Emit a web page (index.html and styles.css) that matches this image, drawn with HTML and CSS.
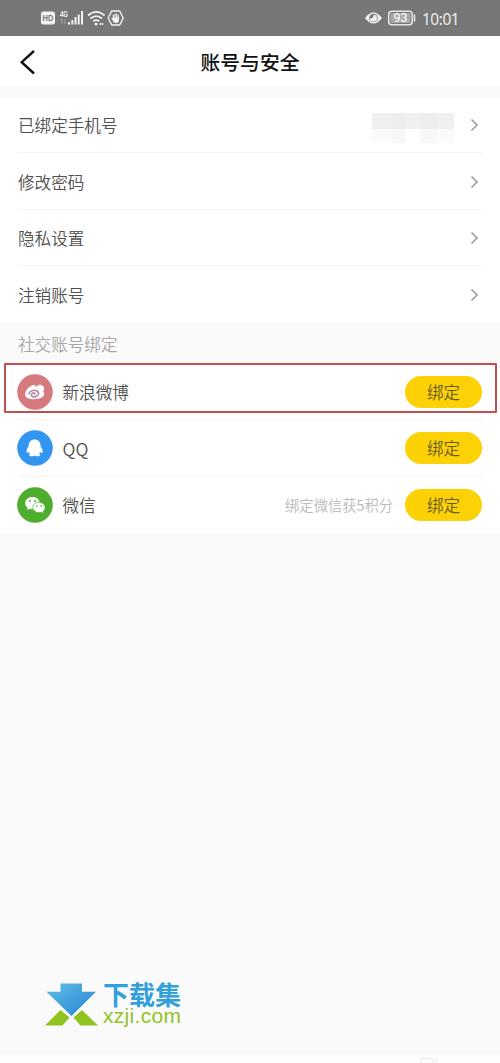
FILE: index.html
```html
<!DOCTYPE html>
<html lang="zh-CN">
<head>
<meta charset="utf-8">
<title>账号与安全</title>
<link rel="stylesheet" href="styles.css">
</head>
<body>
<div class="screen">
  <div class="status">
    <svg class="status-left" width="84" height="20" viewBox="0 0 84 20">
      <rect x="1" y="3.500" width="14" height="13" rx="2.500" fill="#f2f2f2"/>
      <text x="2.600" y="13.200" class="hd" textLength="10.800" lengthAdjust="spacingAndGlyphs">HD</text>
      <text x="20" y="9" class="net" textLength="8" lengthAdjust="spacingAndGlyphs">4G</text>
      <path d="M22 11v5M21 12l1-1M25 11v5l1-1" stroke="#a6a6a6" stroke-width=".9" fill="none"/>
      <path d="M29 14v2.500M32.300 12v4.500M35.500 9v7.500M38.700 6.500v10M42 3v13.500" stroke="#f2f2f2" stroke-width="2" fill="none"/>
      <path d="M48 7.500q8.300-7.200 16.600 0M50.500 10.500q5.800-4.800 11.600 0M53.200 13.200q3.100-2.200 6 0" stroke="#f2f2f2" stroke-width="1.700" fill="none"/>
      <circle cx="56" cy="16" r="1.500" fill="#f2f2f2"/>
      <path d="M59.500 16h4" stroke="#eee" stroke-width="2" stroke-dasharray="1.600 .6"/>
      <path d="M71.700 3h8l3.500 7-3.500 7h-8l-3.500-7z" fill="none" stroke="#f2f2f2" stroke-width="1.400" stroke-linejoin="round"/>
      <path d="M73.400 10.500V7.200M75 10V6M76.700 10V6M78.300 10.500V7.500M72 10.500l1.800 2" fill="none" stroke="#f2f2f2" stroke-width="1.200" stroke-linecap="round"/>
      <path d="M72.800 9.800h6.100v2.400q-.2 2.800-3 2.800t-3.100-3z" fill="#f2f2f2"/>
    </svg>
    <div class="status-right">
      <svg width="52" height="18" viewBox="0 0 52 18">
        <path d="M1 9q8.500-11 17 0q-8.500 11-17 0z" fill="#f0f0f0"/>
        <circle cx="9.500" cy="9" r="4.300" fill="#777"/>
        <path d="M9.500 5.700A3.500 3.500 0 1 1 6 9q1.800.8 2.800-.5T9.500 5.700z" fill="#f0f0f0"/>
        <rect x="24.700" y="2.200" width="23.500" height="13.500" rx="3" fill="none" stroke="#e5e5e5" stroke-width="1.500"/>
        <rect x="26.500" y="4" width="20" height="10" rx="1" fill="#a8a8a8"/>
        <text x="29.500" y="13.200" class="battery" textLength="14" lengthAdjust="spacingAndGlyphs">93</text>
        <path d="M50.500 5.500v7" stroke="#f0f0f0" stroke-width="1.500"/>
      </svg>
      <span class="clock">10:01</span>
    </div>
  </div>

  <header class="header">
    <svg class="back" width="17" height="26" viewBox="0 0 17 26"><path d="M15 2L2.700 13.200L15 24.500" fill="none" stroke="#111" stroke-width="2.400"/></svg>
    <h1 class="title">账号与安全</h1>
  </header>

  <main class="content">
    <div class="list">
      <div class="row"><span class="label">已绑定手机号</span>
        <span class="mask"><i></i><i></i><i></i><i></i><i></i></span>
        <svg class="chevron" width="9" height="14" viewBox="0 0 9 14"><path d="M1.500 1.500L7 7L1.500 12.500" class="chevron-line"/></svg></div>
      <div class="row"><span class="label">修改密码</span>
        <svg class="chevron" width="9" height="14" viewBox="0 0 9 14"><path d="M1.500 1.500L7 7L1.500 12.500" class="chevron-line"/></svg></div>
      <div class="row"><span class="label">隐私设置</span>
        <svg class="chevron" width="9" height="14" viewBox="0 0 9 14"><path d="M1.500 1.500L7 7L1.500 12.500" class="chevron-line"/></svg></div>
      <div class="row"><span class="label">注销账号</span>
        <svg class="chevron" width="9" height="14" viewBox="0 0 9 14"><path d="M1.500 1.500L7 7L1.500 12.500" class="chevron-line"/></svg></div>
    </div>
    <h2 class="section">社交账号绑定</h2>
    <div class="list social">
      <div class="highlight"></div>
      <div class="row">
        <svg class="logo" width="36" height="36" viewBox="0 0 36 36">
          <circle cx="18" cy="18" r="17.800" fill="#d67a7e"/>
          <path d="M8 20.500c0-4 5-9.500 8.700-9.500c1.800 0 2.300.8 2 2c1.600-.6 2.100-2.300 4.300-2.300c3 0 4.600 2.300 4.100 4.800c-.1.900-.6 1.300-1.200 1.700c1.600 1.200 1.700 3.300.6 4.800C24.700 24.300 21 25.300 16.500 25.300S8 23.700 8 20.500z" fill="#fff"/>
          <path d="M12 20c.2-3 4.200-4.300 7.300-3.300c3.600 1.200 2.900 5.300-1.300 6.200c-3.300.7-4.600-1.900-2.800-3.500c1.500-1.200 3.400-.1 2.500 1.300" fill="none" stroke="#b5839b" stroke-width="1.500" stroke-linecap="round"/>
        </svg>
        <span class="name">新浪微博</span><button class="bind">绑定</button>
      </div>
      <div class="row">
        <svg class="logo" width="36" height="36" viewBox="0 0 36 36">
          <circle cx="18" cy="18" r="17.800" fill="#3295f0"/>
          <path d="M17.700 9.700c-4.200 0-6 3-5.800 6.500c-1.500 2-2.700 4.700-1.800 6.400c.6.400 1.300-.4 1.900-1.200c.2 1 .7 1.700 1.300 2.300c-1.800.8-1 2.400.8 2.400c1.600 0 2.800-.2 3.500-.9c.7.700 1.900.9 3.500.9c1.800 0 2.600-1.600.8-2.400c.6-.6 1.100-1.300 1.300-2.300c.6.800 1.300 1.600 1.900 1.200c.9-1.700-.3-4.400-1.800-6.400c.2-3.500-1.500-6.500-5.600-6.500z" fill="#fff" stroke="#fff" stroke-width=".5"/>
        </svg>
        <span class="name qq">QQ</span><button class="bind">绑定</button>
      </div>
      <div class="row">
        <svg class="logo" width="36" height="36" viewBox="0 0 36 36">
          <circle cx="18" cy="18" r="17.800" fill="#4dae2d"/>
          <path d="M15.500 10c-4.200 0-7.300 2.700-7.300 6.200c0 2 1 3.600 2.600 4.700l-.7 2.300l2.700-1.400q1.500.5 3 .5c4 0 7-2.600 7-6.100s-3.200-6.200-7.300-6.200z" fill="#fff"/>
          <path d="M21.900 15.300c-3.500 0-6.100 2.200-6.100 5.100s2.700 5.200 6.100 5.200q1.300 0 2.400-.4l2.200 1.200l-.5-1.900c1.300-1 2.100-2.400 2.100-4.100c0-2.900-2.800-5.100-6.200-5.100z" fill="#fff" stroke="#4dae2d" stroke-width=".7"/>
          <g fill="#4dae2d"><circle cx="13" cy="14" r="1"/><circle cx="18" cy="14" r="1"/><circle cx="19.900" cy="18.900" r=".8"/><circle cx="24.100" cy="18.900" r=".8"/></g>
        </svg>
        <span class="name">微信</span><span class="hint">绑定微信获5积分</span><button class="bind">绑定</button>
      </div>
    </div>
  </main>

  <footer class="footer">
    <div class="brand">
      <svg width="54" height="44" viewBox="0 0 54 44">
        <defs><linearGradient id="arrow" x1="0" y1="0" x2="1" y2="1"><stop offset="0" stop-color="#60bee8"/><stop offset="1" stop-color="#2383cf"/></linearGradient></defs>
        <path d="M15.500 .5h21.500v8.300h14L26.500 33L1.500 8.800h14z" fill="url(#arrow)"/>
        <path d="M15.500 27l9 7.500L17.500 42.500H0zM37 27L53 42.500H35.500L28.500 34.500z" fill="#8fc31f"/>
      </svg>
      <div class="brand-text"><strong class="brand-name">下载集</strong><span class="brand-url">xzji.com</span></div>
    </div>
    <div class="bottom">
      <svg width="24" height="8" viewBox="0 0 24 8"><g fill="none" stroke="#e6e6e6"><path d="M5 8V5q0-2 3-2t3 2q1-3 4-2t3 5M20 7q2-2 0-4"/></g></svg>
    </div>
  </footer>
</div>
</body>
</html>
```
FILE: styles.css
```css
* { box-sizing: border-box; }
body {
  margin: 0;
  font-family: "Noto Sans CJK SC", sans-serif;
  color: #505050;
  background: #fafafa;
}
.screen { width: 500px; height: 1063px; display: flex; flex-direction: column; overflow: hidden; }
.status {
  height: 36px; flex: none; background: #777;
  display: flex; align-items: center; justify-content: space-between;
  padding: 0 41px 0 40px;
}
.status-right { display: flex; align-items: center; gap: 6px; }
.hd { font: bold 8.500px "Liberation Sans", sans-serif; fill: #777; }
.net { font: bold 8.500px "Liberation Sans", sans-serif; fill: #f2f2f2; }
.battery { font: 12px Roboto, sans-serif; fill: #fff; }
.clock { font: 15.500px/20px "Noto Sans", sans-serif; color: #ededed; width: 37px; letter-spacing: -.5px; padding-top: 1px; white-space: nowrap; }
.header {
  height: 51px; flex: none; background: #fff;
  display: grid; grid-template-columns: 60px 1fr 60px; align-items: center;
}
.back { margin-left: 19px; }
.title { margin: 0; font-size: 19.800px; font-weight: 500; line-height: 28px; text-align: center; color: #111; }
.content { padding-top: 10px; flex: 1; }
.list { background: #fff; padding: 0 18px; position: relative; }
.row { height: 56.400px; display: flex; align-items: center; border-bottom: 1px solid #f4f4f4; padding-top: 1px; }
.row:last-child { border-bottom: 0; }
.label, .name { font-size: 16.600px; line-height: 24px; font-weight: 350; }
.label { flex: 1; }
.mask { display: grid; grid-template-columns: 20px 13px 15px 17px 17px; width: 82px; height: 30px; margin: 5px 16px 0 0; }
.mask i { background: linear-gradient(#f0f0f0 0 55%, #fafafa 55%); }
.mask i:nth-child(even) { background: linear-gradient(#eee 0 55%, #f8f8f8 55%); }
.mask i:nth-child(3) { background: linear-gradient(#f0f0f0 0 55%, #fff 55%); }
.chevron { margin-right: 3px; }
.chevron-line { fill: none; stroke: #999; stroke-width: 1.500px; }
.section { height: 41.400px; margin: 0; padding: 0 18px; font-size: 16.600px; line-height: 42px; font-weight: 350; color: #a6a6a6; }
.social .logo { margin-right: 9.500px; margin-left: -1px; }
.social .row { padding-top: 0; }
.name { flex: 1; padding-top: 1px; }
.qq { font-size: 17.500px; padding-top: 2px; }
.hint { font-size: 14.300px; color: #b9b9b9; margin-right: 12px; font-weight: 350; }
.bind {
  width: 77px; height: 32px; border: 0; border-radius: 16px; padding: 0;
  background: #fcd207; color: #6a5a1c;
  font: 350 16.600px/32px "Noto Sans CJK SC", sans-serif;
}
.highlight { position: absolute; left: 4px; top: -1px; width: 493px; height: 50px; border: 2px solid #c4504d; border-radius: 1px; }
.footer { flex: none; }
.brand { display: flex; gap: 4px; margin: 0 0 26px 45px; height: 46px; }
.brand-text { display: grid; grid-template-rows: 22px 22px; }
.brand-name { font-size: 26px; line-height: 22px; font-weight: 700; color: #32a0db; }
.brand-url { font: 21px/22px "Liberation Sans", sans-serif; letter-spacing: .3px; color: #8fc31f; }
.brand-name, .brand-url { display: block; white-space: nowrap; }
.bottom { height: 8px; background: #fdfdfd; padding-left: 416px; display: flex; }
```
